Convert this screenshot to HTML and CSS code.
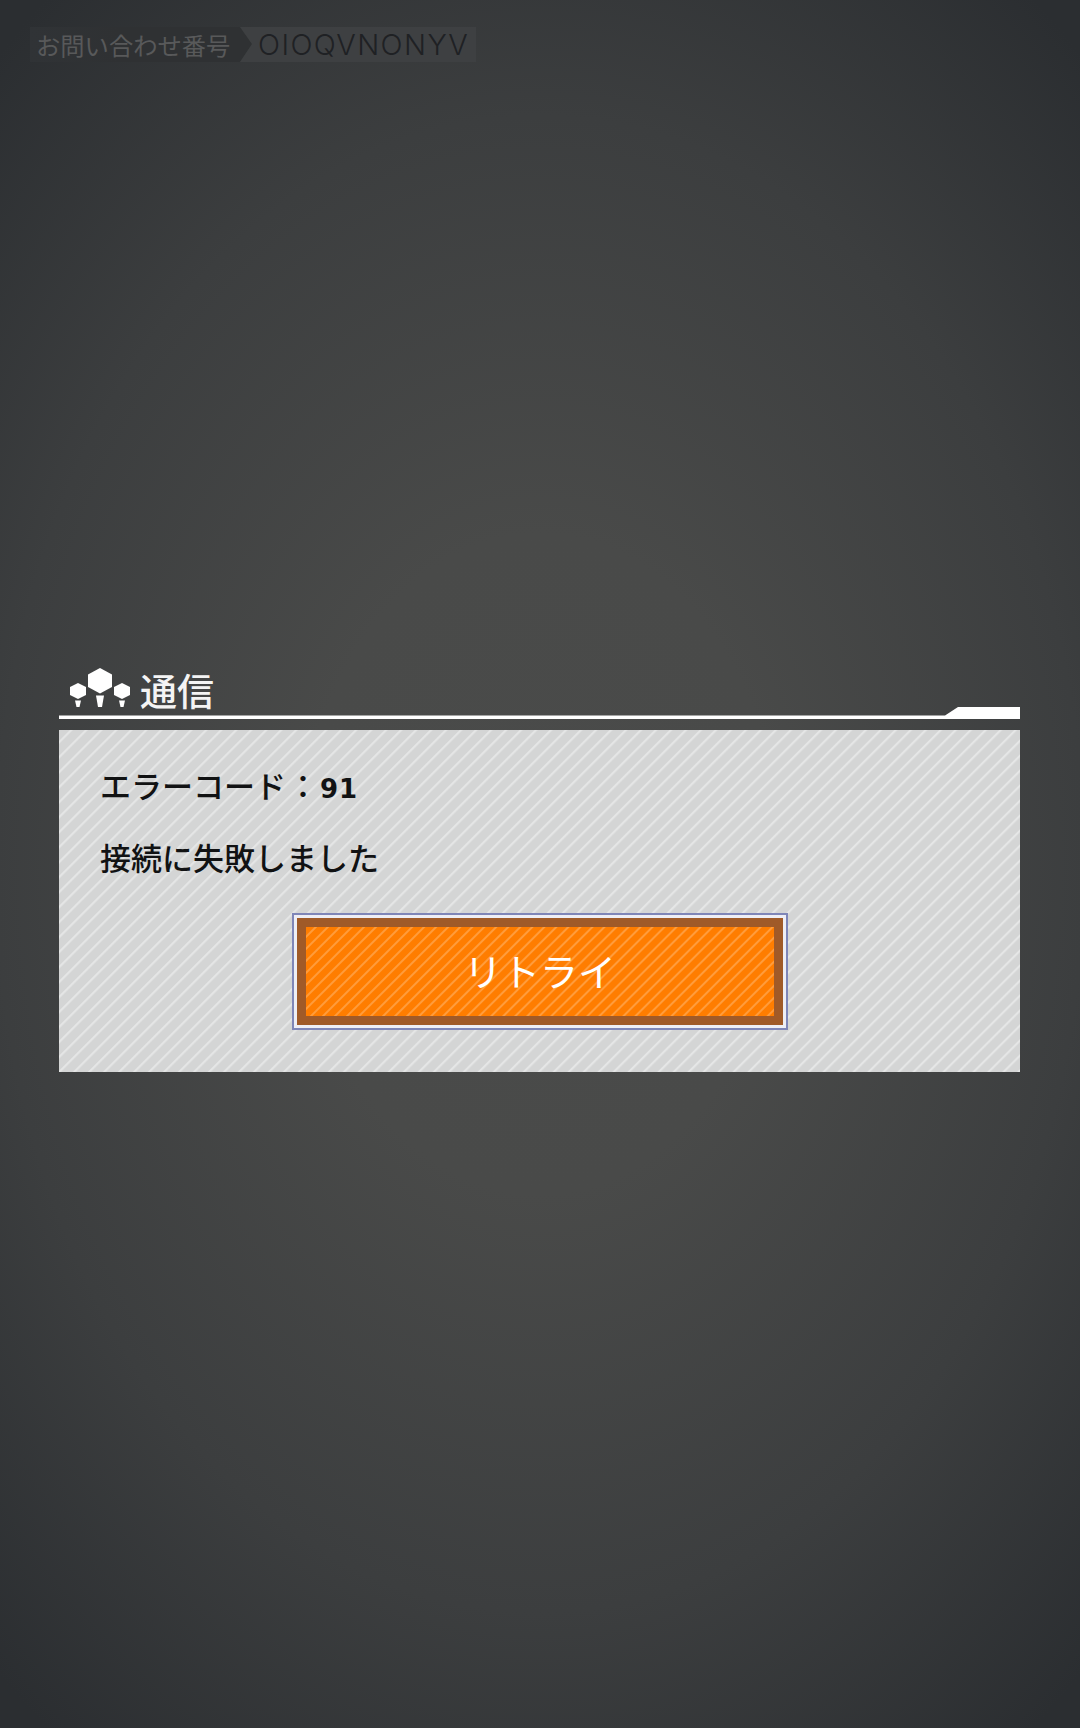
FILE: index.html
```html
<!DOCTYPE html>
<html lang="ja">
<head>
<meta charset="utf-8">
<title>通信</title>
<link rel="stylesheet" href="styles.css">
</head>
<body>
<main class="screen">
  <header class="inquiry">
    <span class="inquiry-label">お問い合わせ番号</span>
    <span class="inquiry-code">OIOQVNONYV</span>
  </header>
  <section class="dialog">
    <div class="dialog-head">
      <svg class="dialog-icon" viewBox="0 0 62 40" aria-hidden="true">
        <path d="M31 1l12 6.500v12.500l-12 6.500-12-6.500V7.500z"/>
        <path d="M27 28.500h8l-2 11.500h-4z"/>
        <path d="M9 16l8 4v8l-8 4-8-4v-8z"/>
        <path d="M6 33.500h6l-1.500 6.500h-3z"/>
        <path d="M53 16l8 4v8l-8 4-8-4v-8z"/>
        <path d="M50 33.500h6l-1.500 6.500h-3z"/>
      </svg>
      <h1 class="dialog-title">通信</h1>
    </div>
    <div class="dialog-rule"></div>
    <div class="dialog-body">
      <p class="message">エラーコード<span class="colon">：</span><span class="digits">91</span></p>
      <p class="message message-second">接続に失敗しました</p>
      <div class="actions">
        <button class="retry" type="button"><span class="retry-face">リトライ</span></button>
      </div>
    </div>
  </section>
</main>
</body>
</html>
```
FILE: styles.css
```css
* { box-sizing: border-box; }
html, body { margin: 0; padding: 0; }
body {
  width: 1080px;
  height: 1728px;
  overflow: hidden;
  font-family: "Noto Sans CJK JP", "Liberation Sans", sans-serif;
}
.screen {
  width: 1080px;
  height: 1728px;
  padding-top: 27px;
  background: radial-gradient(ellipse 800px 1100px at 540px 864px, #4a4b4a 0%, #494a49 30%, #3c3e3f 68%, #2b2e31 100%);
}
.inquiry {
  display: flex;
  align-items: stretch;
  height: 35px;
  margin-left: 30px;
  width: 446px;
}
.inquiry-label {
  width: 222px;
  padding-left: 6px;
  font-size: 24.300px;
  line-height: 35px;
  white-space: nowrap;
  color: #58595a;
  background: linear-gradient(90deg, #303336 0, #2f3133 40%);
  clip-path: polygon(0 0, 210px 0, 222px 17px, 210px 100%, 0 100%);
}
.inquiry-code {
  flex: 1;
  margin-left: -12px;
  padding-left: 18px;
  font-family: "Inter", sans-serif;
  font-weight: 300;
  font-size: 29px;
  letter-spacing: 1.400px;
  line-height: 35px;
  white-space: nowrap;
  color: #1f2124;
  background: #3e4042;
  clip-path: polygon(0 0, 100% 0, 100% 100%, 0 100%, 12px 17px);
}
.dialog {
  width: 961px;
  margin: 605px 0 0 59px;
}
.dialog-head {
  display: flex;
  align-items: flex-end;
  height: 40px;
  padding-left: 10px;
}
.dialog-icon {
  width: 62px;
  height: 40px;
  fill: #ffffff;
}
.dialog-title {
  margin: 0 0 0 9px;
  font-size: 37px;
  font-weight: 500;
  line-height: 34px;
  color: #f4f4f4;
}
.dialog-rule {
  height: 12px;
  background: #ffffff;
  clip-path: polygon(0 8.500px, 886px 8.500px, 899px 0, 100% 0, 100% 100%, 0 100%);
}
.dialog-body {
  height: 342px;
  margin-top: 11px;
  padding: 33px 0 0 41px;
  background: repeating-linear-gradient(135deg, #d4d5d5 0, #d4d5d5 7.200px, #e5e6e6 8.200px, #e5e6e6 9px, #d4d5d5 10.600px);
}
.message {
  margin: 0;
  font-size: 31px;
  font-weight: 500;
  line-height: 44px;
  color: #111213;
  white-space: nowrap;
}
.message-second { margin-top: 24px; }
.colon {
  display: inline-block;
  width: 34px;
  text-align: center;
}
.digits {
  font-family: "DejaVu Sans", sans-serif;
  font-weight: 700;
  font-size: 26px;
  letter-spacing: 1px;
}
.actions {
  width: 496px;
  margin: 34px 0 0 192px;
}
.retry {
  display: block;
  width: 496px;
  height: 117px;
  padding: 3px;
  border: 2px solid #7f86b8;
  background: #eeeef5;
  cursor: pointer;
}
.retry-face {
  display: block;
  height: 107px;
  border: 9px solid #a05a28;
  font-family: "Noto Sans CJK JP", sans-serif;
  font-size: 38px;
  font-weight: 400;
  line-height: 86px;
  text-align: center;
  color: #ffffff;
  background: repeating-linear-gradient(135deg, #ff7d00 0, #ff7d00 5.500px, #ff9c3c 6.500px, #ff9c3c 7.500px, #ff7d00 8.500px);
}
```
